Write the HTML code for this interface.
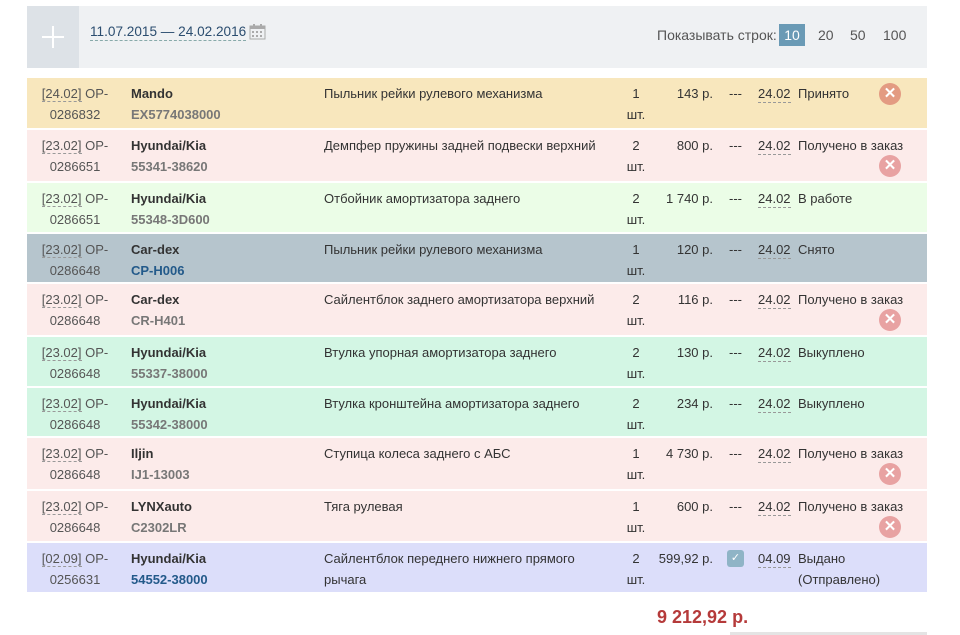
<!DOCTYPE html>
<html><head><meta charset="utf-8"><style>
*{margin:0;padding:0;box-sizing:border-box}
body{width:960px;height:635px;background:#fff;font-family:"Liberation Sans",Arial,sans-serif;font-size:13px;color:#333;position:relative;overflow:hidden}
.hdr{position:absolute;left:27px;top:6px;width:900px;height:62px;background:#eff1f3}
.plus{position:absolute;left:0;top:0;width:52px;height:62px;background:#dde2e7}
.plus:before{content:"";position:absolute;left:15px;top:30px;width:22px;height:2px;background:#fff}
.plus:after{content:"";position:absolute;left:25px;top:20px;width:2px;height:22px;background:#fff}
.dates{position:absolute;left:63px;top:18px;font-size:13.6px;color:#2b4d6f;border-bottom:1px dashed #8aa;line-height:16px;white-space:nowrap}
.cal{position:absolute;left:222px;top:17px}
.rows{position:absolute;left:630px;top:0;height:62px;font-size:14px;color:#444;white-space:nowrap}
.rows span{position:absolute;top:19px;line-height:20px;color:#555}
.rows span.on{background:#6a9ab5;color:#fff;width:26px;text-align:center;height:22px;line-height:22px;top:18px}
.r{position:absolute;left:27px;width:900px;white-space:nowrap}
.r div{position:absolute;line-height:21px;top:5px}
.c1{left:0;width:96px;text-align:center;color:#555}
.c1 u{text-decoration:none;border-bottom:1px dashed #999}
.c2{left:104px;font-weight:bold;color:#333}
.c2 i{font-style:normal;color:#777}
.c2 b{color:#235a8a}
.c3{left:297px;width:300px}
.c4{left:590px;width:38px;text-align:center}
.c5{left:600px;width:86px;text-align:right}
.c6{left:702px}
.c7{left:731px;border-bottom:1px dashed #999;line-height:17px!important;top:7px!important}
.c8{left:771px}
.x{position:absolute;width:22px;height:22px;border-radius:50%;left:852px;color:#fff;font-weight:bold;font-size:15px;text-align:center;line-height:22px!important}
</style></head><body>
<div class="hdr"><div class="plus"></div><div class="dates">11.07.2015 — 24.02.2016</div>
<svg class="cal" width="17" height="17" viewBox="0 0 17 17"><rect x="1" y="3" width="15" height="13" fill="none" stroke="#aaa"/><rect x="1" y="3" width="15" height="3" fill="#aaa"/><rect x="4" y="1" width="2" height="3" fill="#aaa"/><rect x="11" y="1" width="2" height="3" fill="#aaa"/><g fill="#aaa"><rect x="3" y="8" width="2" height="2"/><rect x="7" y="8" width="2" height="2"/><rect x="11" y="8" width="2" height="2"/><rect x="3" y="12" width="2" height="2"/><rect x="7" y="12" width="2" height="2"/><rect x="11" y="12" width="2" height="2"/></g></svg>
<div class="rows"><span style="left:0">Показывать строк:</span><span class="on" style="left:122px">10</span><span style="left:161px">20</span><span style="left:193px">50</span><span style="left:226px">100</span></div></div>

<div class="r" style="top:78px;height:50px;background:#f8e7bd"><div class="c1"><u>[24.02]</u> OP-<br>0286832</div><div class="c2">Mando<br><i>EX5774038000</i></div><div class="c3">Пыльник рейки рулевого механизма</div><div class="c4">1<br>шт.</div><div class="c5">143 р.</div><div class="c6">---</div><div class="c7">24.02</div><div class="c8">Принято</div><div class="x" style="top:5px;background:#e39b82">✕</div></div>

<div class="r" style="top:130px;height:51px;background:#fcebea"><div class="c1"><u>[23.02]</u> OP-<br>0286651</div><div class="c2">Hyundai/Kia<br><i>55341-38620</i></div><div class="c3">Демпфер пружины задней подвески верхний</div><div class="c4">2<br>шт.</div><div class="c5">800 р.</div><div class="c6">---</div><div class="c7">24.02</div><div class="c8">Получено в заказ</div><div class="x" style="top:25px;background:#e8a2a2">✕</div></div>

<div class="r" style="top:183px;height:49px;background:#ebfde7"><div class="c1"><u>[23.02]</u> OP-<br>0286651</div><div class="c2">Hyundai/Kia<br><i>55348-3D600</i></div><div class="c3">Отбойник амортизатора заднего</div><div class="c4">2<br>шт.</div><div class="c5">1 740 р.</div><div class="c6">---</div><div class="c7">24.02</div><div class="c8">В работе</div></div>

<div class="r" style="top:234px;height:48px;background:#b6c5cd"><div class="c1"><u>[23.02]</u> OP-<br>0286648</div><div class="c2">Car-dex<br><b>CP-H006</b></div><div class="c3">Пыльник рейки рулевого механизма</div><div class="c4">1<br>шт.</div><div class="c5">120 р.</div><div class="c6">---</div><div class="c7">24.02</div><div class="c8">Снято</div></div>

<div class="r" style="top:284px;height:51px;background:#fcebea"><div class="c1"><u>[23.02]</u> OP-<br>0286648</div><div class="c2">Car-dex<br><i>CR-H401</i></div><div class="c3">Сайлентблок заднего амортизатора верхний</div><div class="c4">2<br>шт.</div><div class="c5">116 р.</div><div class="c6">---</div><div class="c7">24.02</div><div class="c8">Получено в заказ</div><div class="x" style="top:25px;background:#e8a2a2">✕</div></div>

<div class="r" style="top:337px;height:49px;background:#d3f6e4"><div class="c1"><u>[23.02]</u> OP-<br>0286648</div><div class="c2">Hyundai/Kia<br><i>55337-38000</i></div><div class="c3">Втулка упорная амортизатора заднего</div><div class="c4">2<br>шт.</div><div class="c5">130 р.</div><div class="c6">---</div><div class="c7">24.02</div><div class="c8">Выкуплено</div></div>

<div class="r" style="top:388px;height:48px;background:#d3f6e4"><div class="c1"><u>[23.02]</u> OP-<br>0286648</div><div class="c2">Hyundai/Kia<br><i>55342-38000</i></div><div class="c3">Втулка кронштейна амортизатора заднего</div><div class="c4">2<br>шт.</div><div class="c5">234 р.</div><div class="c6">---</div><div class="c7">24.02</div><div class="c8">Выкуплено</div></div>

<div class="r" style="top:438px;height:51px;background:#fcebea"><div class="c1"><u>[23.02]</u> OP-<br>0286648</div><div class="c2">Iljin<br><i>IJ1-13003</i></div><div class="c3">Ступица колеса заднего с АБС</div><div class="c4">1<br>шт.</div><div class="c5">4 730 р.</div><div class="c6">---</div><div class="c7">24.02</div><div class="c8">Получено в заказ</div><div class="x" style="top:25px;background:#e8a2a2">✕</div></div>

<div class="r" style="top:491px;height:50px;background:#fcebea"><div class="c1"><u>[23.02]</u> OP-<br>0286648</div><div class="c2">LYNXauto<br><i>C2302LR</i></div><div class="c3">Тяга рулевая</div><div class="c4">1<br>шт.</div><div class="c5">600 р.</div><div class="c6">---</div><div class="c7">24.02</div><div class="c8">Получено в заказ</div><div class="x" style="top:25px;background:#e8a2a2">✕</div></div>

<div class="r" style="top:543px;height:49px;background:#dcdefa"><div class="c1"><u>[02.09]</u> OP-<br>0256631</div><div class="c2">Hyundai/Kia<br><b>54552-38000</b></div><div class="c3">Сайлентблок переднего нижнего прямого<br>рычага</div><div class="c4">2<br>шт.</div><div class="c5">599,92 р.</div><div style="left:700px;top:7px;width:17px;height:17px;background:#8fb4c6;border-radius:3px;color:#fff;font-size:11px;text-align:center;line-height:17px">✓</div><div class="c7">04.09</div><div class="c8">Выдано<br>(Отправлено)</div></div>

<div style="position:absolute;left:657px;top:607px;font-size:18px;font-weight:bold;color:#b53a3a">9 212,92 р.</div>
<div style="position:absolute;left:730px;top:632px;width:197px;height:3px;background:#e4e4e4"></div>
</body></html>
